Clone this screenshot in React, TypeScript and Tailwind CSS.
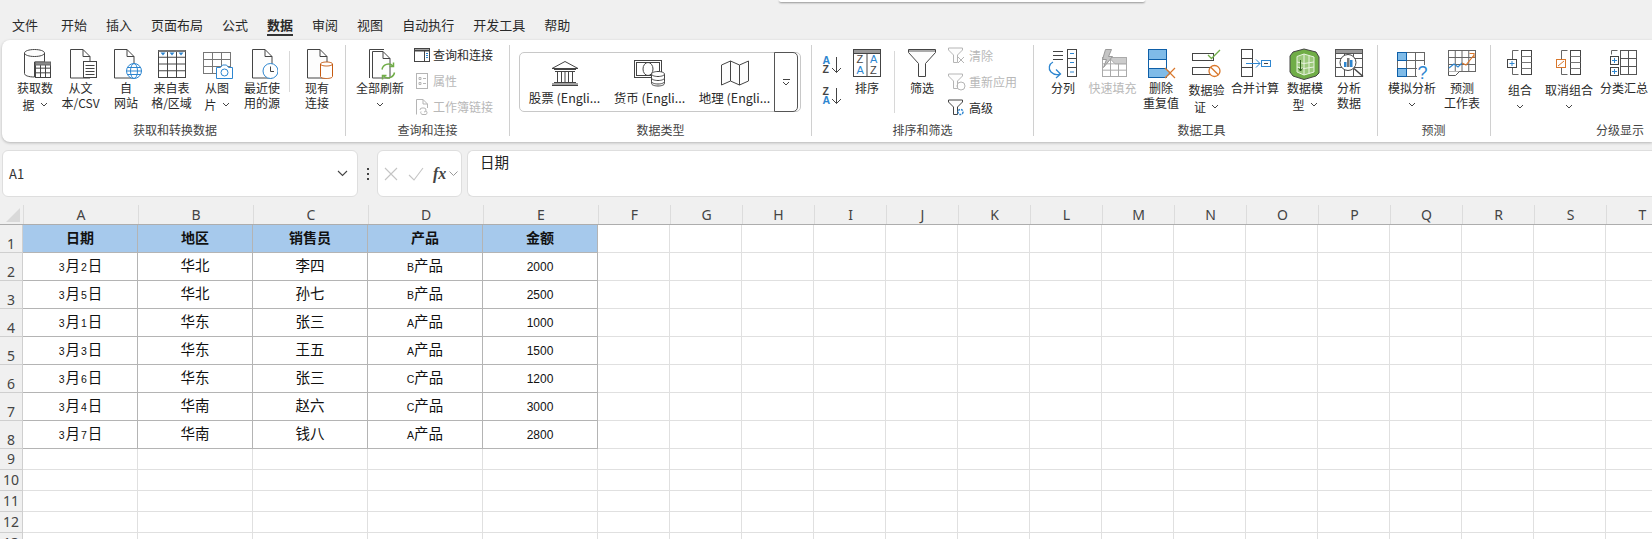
import { ReactNode } from "react";

const INK = "#444";
const BLUE = "#2e86d0";
const ORANGE = "#d9772b";
const GREEN = "#70ad47";
const GREY = "#b5b5b5";

function Svg({ w = 32, h = 32, children }: { w?: number; h?: number; children: ReactNode }) {
  return (
    <svg width={w} height={h} viewBox={`0 0 ${w} ${h}`} fill="none" stroke={INK} strokeWidth="1" className="shrink-0">
      {children}
    </svg>
  );
}

function Chevron({ color = "#444" }: { color?: string }) {
  return (
    <svg width="8" height="5" viewBox="0 0 8 5" fill="none" stroke={color} strokeWidth="1" className="inline-block">
      <path d="M1 1l3 3 3-3" />
    </svg>
  );
}

// folded page shape, shared by most of the document icons
function Page({ x, y = 1, w = 20, h = 29, stroke = INK }: { x: number; y?: number; w?: number; h?: number; stroke?: string }) {
  return (
    <path
      d={`M${x + 0.5} ${y + 0.5}H${x + w - 7}L${x + w} ${y + 7.5}V${y + h}H${x + 0.5}ZM${x + w - 7} ${y + 0.5}V${y + 7.5}H${x + w}`}
      fill="#fdfdfd"
      stroke={stroke}
    />
  );
}

function TableLines({ x, y, w, h, cols, rows, stroke = INK }: { x: number; y: number; w: number; h: number; cols: number; rows: number; stroke?: string }) {
  const parts: string[] = [];
  for (let i = 1; i < cols; i++) parts.push(`M${x + (w * i) / cols} ${y}V${y + h}`);
  for (let i = 1; i < rows; i++) parts.push(`M${x} ${y + (h * i) / rows}H${x + w}`);
  return (
    <>
      <rect x={x} y={y} width={w} height={h} fill="#fff" stroke={stroke} />
      <path d={parts.join("")} stroke={stroke} />
    </>
  );
}

const GetDataIcon = () => (
  <Svg>
    <path d="M5.5 5c0-2 4.500-3.500 10-3.500s10 1.500 10 3.500v9h-10v15c-6 0-10-1.500-10-3.500z" fill="#fdfdfd" />
    <path d="M5.500 5c0 2 4.500 3.500 10 3.500s10-1.500 10-3.500" />
    <TableLines x={16.5} y={15.5} w={15} h={14} cols={3} rows={3} />
    <rect x={16.5} y={14} width={15} height={3} fill="#8a8a8a" stroke="#666" />
  </Svg>
);

const TextFileIcon = () => (
  <Svg>
    <Page x={5} />
    <rect x={18.5} y={13.5} width={13} height={16} fill="#fff" />
    <path d="M20.500 17.500h9M20.500 20.500h9M20.500 23.500h9M20.500 26.500h9" />
  </Svg>
);

const WebIcon = () => (
  <Svg>
    <Page x={4} />
    <g stroke={BLUE}>
      <circle cx="24" cy="23" r="7.5" fill="#fff" />
      <ellipse cx="24" cy="23" rx="3.5" ry="7.5" />
      <path d="M16.500 23h15M17.500 19.500h13M17.500 26.500h13" />
    </g>
  </Svg>
);

const TableIcon = () => (
  <Svg>
    <TableLines x={2.5} y={2.5} w={27} h={27} cols={3} rows={4} />
    <rect x={2.5} y={2} width={27} height={2} fill="#777" stroke="none" />
    <path d="M4.500 4.500h5l-2.500 3zM13.500 4.500h5l-2.500 3zM22.500 4.500h5l-2.500 3z" fill={BLUE} stroke="none" />
  </Svg>
);

const PictureIcon = () => (
  <Svg>
    <TableLines x={2.5} y={4.5} w={27} h={21} cols={3} rows={3} stroke="#777" />
    <path d="M15.500 19.500h4l2-2.500h4l2 2.500h4v11h-16z" fill="#fff" stroke={BLUE} />
    <circle cx="23.5" cy="24.5" r="3.5" stroke={BLUE} />
  </Svg>
);

const RecentIcon = () => (
  <Svg>
    <Page x={6} />
    <circle cx="24.5" cy="23" r="7.5" fill="#fff" stroke={BLUE} />
    <path d="M24.500 18.500v5h3.500" />
  </Svg>
);

const ConnectionIcon = () => (
  <Svg>
    <Page x={6} />
    <path d="M19.500 16c0-1.200 2.800-2 6-2s6 .8 6 2v12.500c0 1.200-2.800 2-6 2s-6-.8-6-2z" fill="#fff" stroke="#c55a11" />
    <path d="M19.500 16c0 1.200 2.800 2 6 2s6-.8 6-2" stroke="#c55a11" />
  </Svg>
);

const RefreshIcon = () => (
  <Svg>
    <path d="M5.500 30V1.500H20" />
    <Page x={8} y={3} w={18} h={27} />
    <g stroke={GREEN} strokeWidth="1.5" fill="none">
      <path d="M18 21.500a6.500 6.500 0 0 1 11-3.500" />
      <path d="M30.500 24.500a6.500 6.500 0 0 1-11 3.500" />
      <path d="M29.500 14.500v4h-4M18.500 31.500v-4h4" />
    </g>
  </Svg>
);

const QueryPaneIcon = () => (
  <Svg w={16} h={16}>
    <rect x=".5" y="1.5" width="15" height="13" fill="#fff" />
    <path d="M.5 3.500h15" strokeWidth="2" />
    <path d="M10.500 3.500v11" />
    <path d="M12 6.500h2M12 8.500h2M12 10.500h2" stroke={BLUE} />
  </Svg>
);

const PropsIcon = () => (
  <Svg w={16} h={16}>
    <g stroke={GREY}>
      <rect x="2.5" y="0.5" width="11" height="15" />
      <path d="M5 4.500h2v2h-2zM5 9.500h2v2h-2zM9 5.500h3M9 10.500h3" />
    </g>
  </Svg>
);

const LinksIcon = () => (
  <Svg w={16} h={16}>
    <g stroke={GREY}>
      <path d="M2.500 15.500V.5H9l4.500 4.500v4M9 .5V5h4.500" />
      <path d="M6 11a2 2 0 0 1 2-2h2a2 2 0 0 1 0 4M12 12a2 2 0 0 1 0 3.500h-3a2 2 0 0 1-2-3" />
    </g>
  </Svg>
);

const BankIcon = () => (
  <Svg w={28} h={26}>
    <path d="M1 8.500 14 1.500l13 7zM3 9.500h22M4 11.500h20M3 22.500h22M1 25.500h26M1 24h26" />
    <path d="M6.500 11.500v11M10.500 11.500v11M14 11.500v11M17.500 11.500v11M21.500 11.500v11" />
  </Svg>
);

const CurrencyIcon = () => (
  <Svg w={32} h={28}>
    <rect x=".5" y="1.5" width="27" height="17" />
    <rect x="2.5" y="3.5" width="23" height="13" />
    <ellipse cx="14" cy="10" rx="5" ry="6.5" />
    <g fill="#fff">
      <path d="M17.500 15c0-1.400 3-2.500 6.500-2.500s6.500 1.100 6.500 2.500v9.500c0 1.400-3 2.500-6.500 2.500s-6.500-1.100-6.500-2.500z" />
      <path d="M17.500 15c0 1.400 3 2.500 6.500 2.500s6.500-1.100 6.500-2.500M17.500 19c0 1.400 3 2.500 6.500 2.500s6.500-1.100 6.500-2.500M17.500 22.500c0 1.400 3 2.500 6.500 2.500s6.500-1.100 6.500-2.500" />
    </g>
  </Svg>
);

const MapIcon = () => (
  <Svg w={28} h={26}>
    <path d="M.5 5 9.500 1l9 4 9-4v20l-9 4-9-4-9 4zM9.500 1v20M18.500 5v20" fill="#fdfdfd" />
  </Svg>
);

function SortSmall({ top, bottom, topBlue }: { top: string; bottom: string; topBlue: boolean }) {
  return (
    <svg width="20" height="18" viewBox="0 0 20 18" fill="none" className="shrink-0">
      <text x="0.500" y="8" fontSize="10.5" fontFamily="Liberation Sans, sans-serif" fontWeight="700" fill={topBlue ? BLUE : INK}>{top}</text>
      <text x="0.500" y="17" fontSize="10.5" fontFamily="Liberation Sans, sans-serif" fontWeight="700" fill={topBlue ? INK : BLUE}>{bottom}</text>
      <path d="M14.500 1v15.500M10 12l4.500 4.500L19 12" stroke={INK} />
    </svg>
  );
}

const SortIcon = () => (
  <Svg>
    <rect x="2.5" y="1.5" width="27" height="27" fill="#fff" />
    <rect x="2.5" y="1.5" width="27" height="4" fill="#999" stroke={INK} />
    <path d="M16 5.500v23" />
    <g fontSize="11" fontFamily="Liberation Sans, sans-serif" stroke="none">
      <text x="5.5" y="15" fill={INK}>Z</text>
      <text x="5.5" y="26" fill={BLUE}>A</text>
      <text x="19" y="15" fill={BLUE}>A</text>
      <text x="19" y="26" fill={INK}>Z</text>
    </g>
  </Svg>
);

const FunnelIcon = () => (
  <Svg>
    <path d="M2.500 1.500h27v3L19.500 15.500v13h-7v-13L2.500 4.500z" fill="#fdfdfd" />
    <path d="M3 2h26v2H3z" fill="#aaa" stroke="none" />
  </Svg>
);

function SmallFunnel({ stroke = GREY, children }: { stroke?: string; children?: ReactNode }) {
  return (
    <Svg w={18} h={18}>
      <path d="M.5 1h14v2L9.500 8v7.500h-4V8L.5 3z" fill="#fdfdfd" stroke={stroke} />
      {children}
    </Svg>
  );
}

const SplitIcon = () => (
  <Svg>
    <path d="M6 3.500h10M6 7.500h10M6 11.500h10" />
    <rect x="20.5" y="1.5" width="9" height="27" fill="#fff" />
    <path d="M20.500 10.500h9M20.500 19.500h9" />
    <path d="M23 5.500h4M23 14.500h4M23 24h4" stroke={BLUE} />
    <path d="M6 14c-4 2-5 7-2 10 2.500 2.500 6 3 9 2M9 21.500l4.500 4.500L9 30" stroke={BLUE} strokeWidth="1.3" />
  </Svg>
);

const FlashFillIcon = () => (
  <Svg>
    <g stroke="#aaa">
      <TableLines x={5.5} y={9.5} w={24} h={19} cols={3} rows={3} stroke="#aaa" />
      <path d="M12 9.500h17.500v6.300H18z" fill="#ccc" />
      <path d="M8.500 1.500h6l-3 7h4l-9 11 3-8h-4z" fill="#c4c4c4" stroke="#999" />
    </g>
  </Svg>
);

const DuplicatesIcon = () => (
  <Svg>
    <rect x="3.5" y="1.5" width="18" height="28" fill="#fff" stroke="#0e5fa8" />
    <rect x="3.5" y="1.5" width="18" height="10" fill="#7fbbe8" stroke="#0e5fa8" />
    <path d="M3.500 20.500h17l5 4.500-5 4.500h-17z" fill="#7fbbe8" stroke="#0e5fa8" />
    <path d="M20 20l10 10M30 20 20 30" stroke={ORANGE} strokeWidth="1.2" />
  </Svg>
);

const ValidationIcon = () => (
  <Svg>
    <rect x="1.5" y="5.5" width="21" height="7" fill="#fff" />
    <rect x="1.5" y="19.5" width="21" height="7" fill="#fff" />
    <path d="M17 7l3.500 3.500L29 2" stroke={GREEN} strokeWidth="1.3" />
    <circle cx="23.5" cy="23" r="5.5" fill="#fff" stroke={ORANGE} strokeWidth="1.3" />
    <path d="M19.800 19.200 27.300 26.800" stroke={ORANGE} strokeWidth="1.3" />
  </Svg>
);

const ConsolidateIcon = () => (
  <Svg>
    <rect x="2.5" y="1.5" width="11" height="27" fill="#fff" />
    <path d="M2.500 10.500h11M2.500 19.500h11" />
    <path d="M7 15.500h14M17 11.500l4 4-4 4" stroke={BLUE} />
    <rect x="22.5" y="12.5" width="9" height="6" fill="#fff" stroke={BLUE} />
    <path d="M25 15.500h4" />
  </Svg>
);

const ModelIcon = () => (
  <Svg>
    <path d="M15 1 27 4 30 9v16l-3 3-12 3.500L4 28 1 24V8L4 4z" fill="#70ad47" />
    <path d="M8 8.500 15 6l10 3v15l-10 3-7-3z" fill="#9cc97c" stroke="#e8f3df" />
    <path d="M8 14l7 1.500L25 14M8 19l7 1.500L25 19M15 6v21M20 7.500v18" stroke="#e8f3df" />
    <path d="M11.500 12v11M9.500 20.500l2 2.500 2-2.500" stroke="#2f5f1d" />
  </Svg>
);

const AnalyzeIcon = () => (
  <Svg>
    <TableLines x={2.5} y={1.5} w={27} h={27} cols={3} rows={3} stroke="#555" />
    <rect x="2.5" y="1.5" width="27" height="4" fill="#999" stroke="#555" />
    <circle cx="15" cy="14.5" r="8" fill="#fff" />
    <path d="M21 20.500l9 8" strokeWidth="1.5" />
    <rect x="11" y="14" width="2.5" height="5" fill={BLUE} stroke="none" />
    <rect x="14" y="10" width="2.5" height="9" fill="#777" stroke="none" />
    <rect x="17" y="12" width="2.5" height="7" fill={BLUE} stroke="none" />
  </Svg>
);

const WhatIfIcon = () => (
  <Svg>
    <TableLines x={1.5} y={4.5} w={27} h={24} cols={3} rows={3} stroke="#666" />
    <rect x="1.5" y="4.5" width="9" height="8" fill="#7fbbe8" stroke="#0e5fa8" />
    <rect x="1.5" y="20.5" width="9" height="8" fill="#7fbbe8" stroke="#0e5fa8" />
    <rect x="21" y="17" width="11" height="15" fill="#fff" stroke="none" />
    <text x="21.5" y="31" fontSize="18" fontFamily="Liberation Sans, sans-serif" fill={BLUE} stroke="none">?</text>
  </Svg>
);

const ForecastIcon = () => (
  <Svg>
    <TableLines x={2.5} y={2.5} w={27} h={21} cols={4} rows={3} stroke="#666" />
    <path d="M2.500 23.500v4h7l4-4" stroke="#555" fill="#fff" />
    <path d="M3 20l5-4 4 3 4-4" stroke={BLUE} strokeWidth="1.2" />
    <path d="M16 15l4 2 8-10M23.500 5.500H28V10" stroke={ORANGE} strokeWidth="1.2" />
  </Svg>
);

function OutlineBase({ color, children }: { color: string; children: ReactNode }) {
  return (
    <Svg>
      <rect x="17.5" y="2.5" width="10" height="24" fill="#fff" />
      <path d="M17.500 8.500h10M17.500 14.500h10M17.500 20.500h10" stroke="#777" />
      <path d="M14.500 2.500h-6v9M8.500 19.500v7h6" stroke="#666" />
      <rect x="3.5" y="11.5" width="9" height="8" fill="#fff" stroke={color} />
      {children}
    </Svg>
  );
}

const GroupIcon = () => (
  <OutlineBase color={INK}>
    <path d="M8 13v5M5.500 15.500h5" stroke={BLUE} />
  </OutlineBase>
);

const UngroupIcon = () => (
  <OutlineBase color={ORANGE}>
    <path d="M5 18l6-5" stroke={ORANGE} />
  </OutlineBase>
);

const SubtotalIcon = () => (
  <Svg>
    <TableLines x={12.5} y={2.5} w={16} h={24} cols={2} rows={3} stroke="#555" />
    <path d="M9.500 2.500h-6v4" stroke="#666" />
    <rect x="2.5" y="8.5" width="8" height="8" fill="#fff" />
    <rect x="2.5" y="19.5" width="8" height="8" fill="#fff" />
    <path d="M6.500 10v5M4 12.500h5M6.500 21v5M4 23.500h5" stroke={BLUE} />
  </Svg>
);

function BigButton({ icon, lines, w, chevronOn, drop, grey }: { icon: ReactNode; lines: string[]; w: string; chevronOn?: boolean; drop?: boolean; grey?: boolean }) {
  return (
    <div className={`flex shrink-0 flex-col items-center ${w}`}>
      <div className="flex h-[32px] items-center justify-center">{icon}</div>
      <div className={`whitespace-nowrap text-center text-[12px] leading-[15px] ${drop ? "mt-[1.5px]" : ""} ${grey ? "text-[#b8b8b8]" : "text-[#2a2a2a]"}`}>
        {lines.map((line, i) => (
          <div key={i} className="h-[15px]">
            {line}
            {chevronOn && i === lines.length - 1 && (
              <span className={line ? "ml-[5px] align-[2px]" : "align-[2px]"}>
                <Chevron />
              </span>
            )}
          </div>
        ))}
      </div>
    </div>
  );
}

function SmallRow({ icon, label, grey }: { icon: ReactNode; label: string; grey?: boolean }) {
  return (
    <div className={`flex h-[20px] items-center gap-[3px] whitespace-nowrap text-[12px] ${grey ? "text-[#b8b8b8]" : "text-[#2a2a2a]"}`}>
      {icon}
      {label}
    </div>
  );
}

function Group({ w, label, labelClass = "justify-center", last, children }: { w: string; label: string; labelClass?: string; last?: boolean; children: ReactNode }) {
  return (
    <div className={`mt-[5px] flex h-[91px] shrink-0 flex-col ${w} ${last ? "" : "border-r border-[#d0d0d0]"}`}>
      <div className="flex h-[77px]">{children}</div>
      <div className={`flex h-[14px] text-[12px] leading-[15px] text-[#444] ${labelClass}`}>{label}</div>
    </div>
  );
}

function TypeItem({ icon, label }: { icon: ReactNode; label: string }) {
  return (
    <div className="flex w-[85px] shrink-0 flex-col items-center pt-[6px]">
      <div className="flex h-[28px] items-center justify-center">{icon}</div>
      <div className="mt-[2px] whitespace-nowrap text-[12.5px] leading-[18px] text-[#2a2a2a]">{label}</div>
    </div>
  );
}

function Ribbon() {
  return (
    <div className="ml-[2px] flex h-[102px] rounded-l-lg bg-white shadow-[0_1px_3px_rgba(0,0,0,0.25)]">
      <Group w="w-[344px]" label="获取和转换数据" labelClass="justify-center pl-[3px]">
        <div className="flex pl-[10px] pt-[3px]">
          <BigButton w="w-[46px]" icon={<GetDataIcon />} lines={["获取数", "据"]} chevronOn />
          <BigButton w="w-[45px]" icon={<TextFileIcon />} lines={["从文", "本/CSV"]} />
          <BigButton w="w-[46px]" icon={<WebIcon />} lines={["自", "网站"]} />
          <BigButton w="w-[45px]" icon={<TableIcon />} lines={["来自表", "格/区域"]} />
          <BigButton w="w-[46px]" icon={<PictureIcon />} lines={["从图", "片"]} chevronOn />
          <BigButton w="w-[44px]" icon={<RecentIcon />} lines={["最近使", "用的源"]} />
          <div className="ml-[5px] mt-[3px] h-[41px] w-px bg-[#d8d8d8]" />
          <BigButton w="w-[49px] pl-[5px]" icon={<ConnectionIcon />} lines={["现有", "连接"]} />
        </div>
      </Group>
      <Group w="w-[164px]" label="查询和连接">
        <div className="flex pl-[4px] pt-[3px]">
          <BigButton w="w-[60px]" icon={<RefreshIcon />} lines={["全部刷新", ""]} chevronOn />
          <div className="-mt-[3px] ml-[4px] flex flex-col gap-[6px]">
            <SmallRow icon={<QueryPaneIcon />} label="查询和连接" />
            <SmallRow grey icon={<PropsIcon />} label="属性" />
            <SmallRow grey icon={<LinksIcon />} label="工作簿链接" />
          </div>
        </div>
      </Group>
      <Group w="w-[302px]" label="数据类型">
        <div className="ml-[9px] mt-[7px] flex h-[60px] w-[282px] rounded-[5px] border border-[#c8c8c8] pl-[2px]">
          <TypeItem icon={<BankIcon />} label="股票 (Engli..." />
          <TypeItem icon={<CurrencyIcon />} label="货币 (Engli..." />
          <TypeItem icon={<MapIcon />} label="地理 (Engli..." />
          <div className="-my-px -mr-px ml-[-3px] flex w-[24px] items-center justify-center rounded-r-[5px] border border-[#555]">
            <div className="flex flex-col items-center gap-[1px]">
              <div className="h-px w-[7px] bg-[#444]" />
              <Chevron />
            </div>
          </div>
        </div>
      </Group>
      <Group w="w-[222px]" label="排序和筛选">
        <div className="flex pl-[10px] pt-[3px]">
          <div className="flex w-[20px] flex-col gap-[13px] pt-[8px]">
            <SortSmall top="A" bottom="Z" topBlue />
            <SortSmall top="Z" bottom="A" topBlue={false} />
          </div>
          <BigButton w="w-[42px] ml-[4px]" icon={<SortIcon />} lines={["排序"]} />
          <div className="ml-[6px] mt-[3px] h-[62px] w-px bg-[#d8d8d8]" />
          <BigButton w="w-[40px] ml-[7px]" icon={<FunnelIcon />} lines={["筛选"]} />
          <div className="-mt-[2px] ml-[6px] flex flex-col gap-[6px]">
            <SmallRow grey icon={<SmallFunnel><path d="M10 10l6 6M16 10l-6 6" stroke={GREY} /></SmallFunnel>} label="清除" />
            <SmallRow grey icon={<SmallFunnel><circle cx="13" cy="13" r="4" stroke={GREY} /></SmallFunnel>} label="重新应用" />
            <SmallRow icon={<SmallFunnel stroke={INK}><circle cx="12.5" cy="13" r="2.5" stroke={BLUE} strokeWidth="1.5" strokeDasharray="2 1" /></SmallFunnel>} label="高级" />
          </div>
        </div>
      </Group>
      <Group w="w-[344px]" label="数据工具" labelClass="justify-center pr-[8px]">
        <div className="flex pl-[4px] pt-[3px]">
          <BigButton w="w-[50px]" icon={<SplitIcon />} lines={["分列"]} />
          <BigButton w="w-[49px]" grey icon={<FlashFillIcon />} lines={["快速填充"]} />
          <BigButton w="w-[48px]" icon={<DuplicatesIcon />} lines={["删除", "重复值"]} />
          <BigButton w="w-[43px]" drop icon={<ValidationIcon />} lines={["数据验", "证"]} chevronOn />
          <BigButton w="w-[54px]" icon={<ConsolidateIcon />} lines={["合并计算"]} />
          <BigButton w="w-[46px]" icon={<ModelIcon />} lines={["数据模", "型"]} chevronOn />
          <BigButton w="w-[42px]" icon={<AnalyzeIcon />} lines={["分析", "数据"]} />
        </div>
      </Group>
      <Group w="w-[113px]" label="预测" labelClass="justify-center pr-[1px]">
        <div className="flex pl-[4px] pt-[3px]">
          <BigButton w="w-[60px]" icon={<WhatIfIcon />} lines={["模拟分析", ""]} chevronOn />
          <BigButton w="w-[40px]" icon={<ForecastIcon />} lines={["预测", "工作表"]} />
        </div>
      </Group>
      <Group last w="w-[159px]" label="分级显示" labelClass="justify-end pr-[6px]">
        <div className="flex pl-[9px] pt-[3px]">
          <BigButton w="w-[40px]" drop icon={<GroupIcon />} lines={["组合", ""]} chevronOn />
          <BigButton w="w-[58px]" drop icon={<UngroupIcon />} lines={["取消组合", ""]} chevronOn />
          <BigButton w="w-[52px]" icon={<SubtotalIcon />} lines={["分类汇总"]} />
        </div>
      </Group>
    </div>
  );
}

function FormulaBar() {
  return (
    <div className="mt-[8px] flex h-[47px]">
      <div className="ml-[2px] flex w-[356px] items-center justify-between rounded-[6px] border border-[#dedede] bg-white pl-[6px] pr-[9px] text-[13px] text-[#333]">
        A1
        <svg width="11" height="7" viewBox="0 0 11 7" fill="none" stroke="#444" strokeWidth="1.1">
          <path d="M1 1l4.500 4.500L10 1" />
        </svg>
      </div>
      <div className="flex w-[19px] flex-col items-center justify-center gap-[3px]">
        <div className="h-[2px] w-[2px] bg-[#444]" />
        <div className="h-[2px] w-[2px] bg-[#444]" />
        <div className="h-[2px] w-[2px] bg-[#444]" />
      </div>
      <div className="flex w-[85px] items-center rounded-[6px] border border-[#dedede] bg-white pl-[5px]">
        <svg width="14" height="14" viewBox="0 0 14 14" fill="none" stroke="#c4c4c4" strokeWidth="1.1" className="ml-[1px]">
          <path d="M1 1l12 12M13 1 1 13" />
        </svg>
        <svg width="16" height="14" viewBox="0 0 16 14" fill="none" stroke="#c4c4c4" strokeWidth="1.1" className="ml-[10px]">
          <path d="M1 8l5 5L15 1" />
        </svg>
        <span className="ml-[9px] font-['Liberation_Serif',serif] text-[16px] font-bold italic leading-none text-[#444]">fx</span>
        <svg width="9" height="6" viewBox="0 0 9 6" fill="none" stroke="#999" className="ml-[3px]">
          <path d="M.5.5l4 4 4-4" />
        </svg>
      </div>
      <div className="ml-[5px] flex-1 rounded-l-[6px] border border-r-0 border-[#dedede] bg-white pl-[12px] pt-[1px] text-[14.5px] leading-[20px] text-[#222]">
        日期
      </div>
    </div>
  );
}

const COLUMNS = ["A", "B", "C", "D", "E", "F", "G", "H", "I", "J", "K", "L", "M", "N", "O", "P", "Q", "R", "S", "T"];
const GRID = "grid grid-cols-[23px_repeat(5,115px)_repeat(15,72px)]";

const SALES = [
  { day: "2", region: "华北", rep: "李四", product: "B", amount: "2000" },
  { day: "5", region: "华北", rep: "孙七", product: "B", amount: "2500" },
  { day: "1", region: "华东", rep: "张三", product: "A", amount: "1000" },
  { day: "3", region: "华东", rep: "王五", product: "A", amount: "1500" },
  { day: "6", region: "华东", rep: "张三", product: "C", amount: "1200" },
  { day: "4", region: "华南", rep: "赵六", product: "C", amount: "3000" },
  { day: "7", region: "华南", rep: "钱八", product: "A", amount: "2800" },
];

const Small = ({ children }: { children: ReactNode }) => (
  <span className="mx-[1px] font-['Liberation_Sans',sans-serif] text-[10.5px]">{children}</span>
);

function TableCell({ children, header }: { children?: ReactNode; header?: boolean }) {
  return (
    <div className={`flex items-center justify-center border-b border-r border-[#b4b4b4] pb-[3px] text-[#111] ${header ? "bg-[#a6c9ec] text-[14px] font-bold" : "bg-white text-[14.5px]"}`}>
      <span>{children}</span>
    </div>
  );
}

function RowHeader({ n, tall }: { n: number; tall?: boolean }) {
  return (
    <div className={`flex justify-center border-b border-r border-[#cfcfcf] bg-[#f0f0f0] font-['Noto_Sans',sans-serif] text-[14px] text-[#444] ${tall ? "items-end leading-[16px]" : "items-center leading-[20px]"}`}>
      {n}
    </div>
  );
}

function Sheet() {
  return (
    <div className="mt-[8px]">
      <div className={`${GRID} h-[20px] border-b border-[#adadad]`}>
        <div className="flex items-end justify-end pb-[2px] pr-[3px]">
          <svg width="14" height="14" viewBox="0 0 14 14">
            <path d="M14 0v14H0z" fill="#d9d9d9" />
          </svg>
        </div>
        {COLUMNS.map((c) => (
          <div key={c} className="flex items-center justify-center border-l border-[#dcdcdc] font-['Noto_Sans',sans-serif] text-[14px] leading-[18px] text-[#444]">
            {c}
          </div>
        ))}
      </div>
      <div className={`${GRID} h-[28px]`}>
        <RowHeader n={1} tall />
        {["日期", "地区", "销售员", "产品", "金额"].map((t) => (
          <TableCell key={t} header>{t}</TableCell>
        ))}
        {COLUMNS.slice(5).map((c) => (
          <div key={c} className="border-b border-r border-[#e0e0e0] bg-white" />
        ))}
      </div>
      {SALES.map((row, i) => (
        <div key={i} className={`${GRID} h-[28px]`}>
          <RowHeader n={i + 2} tall />
          <TableCell>
            <Small>3</Small>月<Small>{row.day}</Small>日
          </TableCell>
          <TableCell>{row.region}</TableCell>
          <TableCell>{row.rep}</TableCell>
          <TableCell>
            <span className="font-['Liberation_Sans',sans-serif] text-[10.5px]">{row.product}</span>产品
          </TableCell>
          <TableCell>
            <span className="font-['Liberation_Sans',sans-serif] text-[12px]">{row.amount}</span>
          </TableCell>
          {COLUMNS.slice(5).map((c) => (
            <div key={c} className="border-b border-r border-[#e0e0e0] bg-white" />
          ))}
        </div>
      ))}
      {[9, 10, 11, 12, 13].map((n) => (
        <div key={n} className={`${GRID} h-[21px]`}>
          <RowHeader n={n} />
          {COLUMNS.map((c) => (
            <div key={c} className="border-b border-r border-[#e0e0e0] bg-white" />
          ))}
        </div>
      ))}
    </div>
  );
}

const TABS = ["文件", "开始", "插入", "页面布局", "公式", "数据", "审阅", "视图", "自动执行", "开发工具", "帮助"];

export default function App() {
  return (
    <div className="h-[539px] w-[1652px] overflow-hidden bg-[#f0f0f0] font-['Noto_Sans_CJK_SC','Noto_Sans',sans-serif]">
      <div className="ml-[779px] h-[2px] w-[366px] rounded-b-sm bg-white shadow-[0_1px_2px_rgba(0,0,0,0.4)]" />
      <div className="flex h-[38px] items-center gap-[19px] pl-[12px] pt-[7px] text-[13px] text-[#2a2a2a]">
        {TABS.map((tab, i) => (
          <div key={tab} className={`relative ${i === 0 ? "mr-[4px]" : ""} ${tab === "数据" ? "font-bold" : ""}`}>
            {tab}
            {tab === "数据" && <div className="absolute inset-x-0 bottom-[-2px] h-[2px] bg-[#333]" />}
          </div>
        ))}
      </div>
      <Ribbon />
      <FormulaBar />
      <Sheet />
    </div>
  );
}
